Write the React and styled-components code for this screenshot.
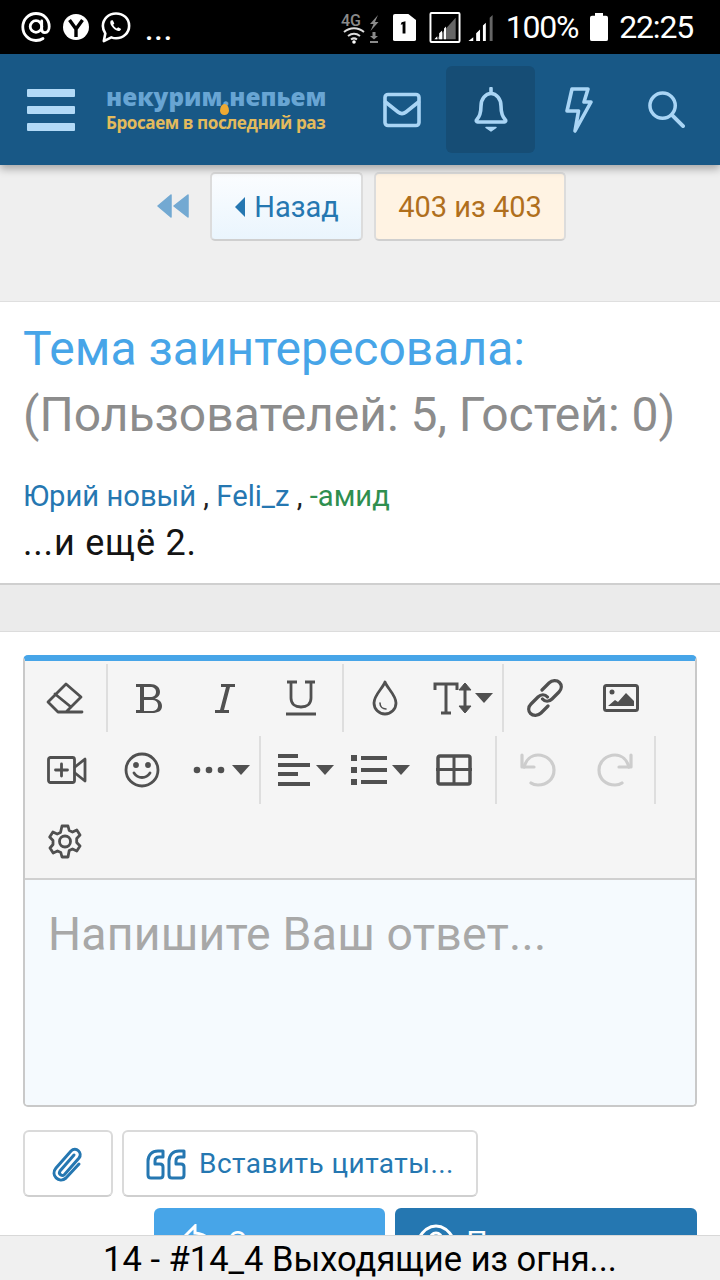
import React from "react";
import styled, { createGlobalStyle } from "styled-components";

const Global = createGlobalStyle`
  html, body { margin: 0; padding: 0; background: #fff; }
  * { box-sizing: border-box; }
  body { font-family: Roboto, "Liberation Sans", sans-serif; }
`;

const Page = styled.div`
  width: 720px; height: 1280px; overflow: hidden; position: relative; background: #efefef;
`;
const StatusBar = styled.div`
  height: 54px; background: #000; color: #fff; display: flex; align-items: center; padding: 0 27px 0 21px;
  font-family: Roboto, sans-serif; font-size: 32px;
`;
const StatusLeft = styled.div`display: flex; align-items: center; gap: 12px; flex: 1;`;
const Dots = styled.span`font-size: 30px; line-height: 1; margin: 6px 0 0 2px; letter-spacing: 1px; font-weight: 500;`;
const StatusRight = styled.div`display: flex; align-items: center;`;
const StatusText = styled.span`
  font-size: 32px; line-height: 1; letter-spacing: ${p => p.$ls}px;
  margin-left: ${p => p.$ml || 0}px;
`;
const Nav = styled.header`
  height: 111px; background: #185886; display: flex; align-items: center; padding-left: 27px;
  box-shadow: 0 4px 8px rgba(0,0,0,.3); position: relative; z-index: 1;
`;
const Burger = styled.div`
  width: 48px; height: 42px; display: flex; flex-direction: column; justify-content: space-between;
  span { height: 8px; background: #b2daf7; display: block; border-radius: 1px; }
`;
const Logo = styled.div`
  margin: 0 0 4px 31px; width: 222px; position: relative; height: 56px; font-family: "Open Sans", sans-serif; font-weight: 700;
`;
const LogoTop = styled.div`
  font-size: 24.3px; line-height: 33px; color: #68a5d3; white-space: nowrap; font-weight: 800;
`;
const LogoBottom = styled.div`
  font-size: 17.1px; line-height: 19px; color: #e3bb5c; letter-spacing: -0.45px; white-space: nowrap;
`;
const Flame = styled.span`
  position: absolute; left: 114px; top: 24px; width: 9px; height: 11px; background: #eeaa33; border-radius: 50% 50% 50% 50% / 65% 65% 40% 40%;
`;
const NavIcons = styled.div`display: flex; margin-left: 29px; align-items: center;`;
const NavIcon = styled.div`
  width: 89px; height: 87px; display: flex; align-items: center; justify-content: center; border-radius: 6px;
  background: ${p => (p.$active ? "#164d75" : "transparent")};
  padding-right: ${p => p.$pr || 0}px;
`;
const PagerRow = styled.div`
  height: 136px; padding: 7px 0 0 157px; display: flex; align-items: flex-start; background: #efefef;
`;
const BackArrows = styled.div`height: 68px; width: 53px; display: flex; align-items: center; flex: none;`;
const PagerButton = styled.div`
  height: 69px; display: flex; align-items: center; justify-content: center; border-radius: 5px; font-size: 29px;
  border: 2px solid #dcdcdc; border-bottom-color: #cfcfcf; margin-right: 11px; width: ${p => p.$w}px;
  color: ${p => p.$c}; background: ${p => p.$bg};
`;
const Block = styled.section`
  background: #fff; border-top: 1px solid #dfdfdf; border-bottom: 2px solid #cfcfcf; height: 284px; padding: 14px 23px 0;
`;
const Title = styled.div`font-size: 48px; line-height: 66px; color: #47a5e8; white-space: nowrap;`;
const Subtitle = styled(Title)`color: #8c8c8c;`;
const Users = styled.div`margin-top: 30px; font-size: 29.2px; line-height: 36px; color: #222; white-space: nowrap;`;
const UserLink = styled.span`color: ${p => p.$c || "#2577b1"};`;
const More = styled.div`font-size: 36px; line-height: 58px; color: #141414; white-space: nowrap; letter-spacing: .8px;`;
const Spacer = styled.div`height: 46px; background: #ebebeb;`;
const Reply = styled.section`
  background: #fff; border-top: 1px solid #dcdcdc; height: 700px; padding: 23px 23px 0;
`;
const Editor = styled.div`
  height: 452px; border-radius: 5px; overflow: hidden; border: 2px solid #c9c9c9; border-top: 6px solid #47a5e8; display: flex; flex-direction: column;
`;
const Toolbar = styled.div`
  background: #f5f5f5; height: 219px; border-bottom: 2px solid #d0d0d0; padding-top: 3px; padding-left: 2px;
`;
const ToolRow = styled.div`display: flex; height: 72px; align-items: flex-start; padding-left: ${p => p.$pl || 0}px;`;
const ToolButton = styled.div`
  width: 76px; height: 67px; display: flex; align-items: center; justify-content: center; flex: none;
  gap: ${p => p.$gap ?? 7}px; padding-left: ${p => p.$shift || 0}px;
`;
const ToolSep = styled.div`
  width: 2px; height: 68px; background: #dedede; flex: none;
  margin: 0 3px 0 ${p => p.$ml ?? 3}px;
`;
const Placeholder = styled.div`
  flex: 1; background: #f5fafe; padding: 28px 23px; font-size: 46.4px; line-height: 52px; color: #a8a8a8; white-space: nowrap; letter-spacing: .2px;
`;
const AttachRow = styled.div`display: flex; gap: 9px; margin-top: 23px;`;
const AttachButton = styled.div`
  height: 67px; border: 2px solid #dadada; border-bottom-color: #cfcfcf; border-radius: 6px; background: #fff; color: #2577b1;
  display: flex; align-items: center; justify-content: center; gap: 12px; font-size: 28px; width: ${p => p.$w}px; letter-spacing: .45px;
`;
const SubmitRow = styled.div`display: flex; justify-content: flex-end; gap: 10px; margin-top: 11px;`;
const SubmitButton = styled.div`
  height: 66px; border-radius: 6px; width: ${p => p.$w}px; background: ${p => p.$bg}; color: #fff; display: flex; align-items: flex-start; justify-content: center;
  gap: 10px; padding-top: 16px; font-size: 30px;
`;
const Footer = styled.div`
  position: fixed; left: 0; right: 0; top: 1235px; height: 45px; background: #f0f0f0; border-top: 1px solid #d8d8d8;
  color: #000; font-size: 34.5px; line-height: 47px; text-align: center; white-space: nowrap; z-index: 2;
`;
const StatusIcon = styled.svg`margin-left: ${p => p.$ml || 0}px; flex: none;`;

const navStroke = { fill: "none", stroke: "#a9d5f5", strokeWidth: 3.6, strokeLinecap: "round", strokeLinejoin: "round" };
const tool = { fill: "none", stroke: "#505050", strokeWidth: 2.8, strokeLinecap: "round", strokeLinejoin: "round" };
const dim = { ...tool, stroke: "#cdcdcd", strokeWidth: 3.2 };

const Caret = () => <svg width="18" height="10" viewBox="0 0 18 10"><path d="M0 0h18L9 10z" fill="#505050" /></svg>;

export default function App() {
  return (
    <Page>
      <Global />
      <StatusBar>
        <StatusLeft>
          <svg width="30" height="32" viewBox="0 0 30 32" fill="none" stroke="#fff" strokeWidth="2.8" strokeLinecap="round">
            <path d="M22 27.5c-2 1.4-4.5 2-7 2C7.5 29.5 1.8 23.5 1.8 16S7.5 2.5 15 2.5 28.2 8 28.2 15.5c0 3.6-1.7 6.2-4.3 6.2-2 0-3.2-1.5-3.2-3.6V10" />
            <circle cx="15" cy="15.5" r="5.8" />
          </svg>
          <svg width="26" height="28" viewBox="0 0 26 28">
            <circle cx="13" cy="14" r="13" fill="#fff" />
            <path d="M6.5 7l6.5 9 6.5-9M13 15.5V24" fill="none" stroke="#000" strokeWidth="3.4" />
          </svg>
          <svg width="30" height="33" viewBox="0 0 32 34" fill="none" stroke="#fff" strokeWidth="2.8">
            <path d="M16 2C8 2 2 8 2 15.5c0 3 1 5.6 2.6 7.8L3 31.5l8-4c1.500.6 3.200 1 5 1 8 0 14-6 14-13.500S24 2 16 2z" strokeLinejoin="round" />
            <path d="M10.500 9.500c-1 1.500-.8 3.500.8 6 1.800 2.700 4.200 4.700 7 5.200 1.500.2 2.700-.7 3.200-2.200l-3.200-1.800-1.500 1.300c-1.700-.8-3-2.200-3.800-4l1.200-1.300-1.600-3.400z" fill="#fff" stroke="none" />
          </svg>
          <Dots>...</Dots>
        </StatusLeft>
        <StatusRight>
          <StatusIcon width="40" height="44" viewBox="0 0 40 44">
            <text x="1" y="21" fontFamily="Roboto, sans-serif" fontSize="16" fontWeight="500" fill="#8a8a8a">4G</text>
            <path d="M4 27c6-5 14-5 20 0M8 31c4-3 8-3 12 0M11 34.500c2-1.500 4-1.500 6 0" fill="none" stroke="#dcdcdc" strokeWidth="2" />
            <circle cx="14" cy="37" r="1.800" fill="#fff" />
            <path d="M38 10l-8 9h3.500l-3 7 8-9H35z" fill="#8a8a8a" />
            <path d="M32.500 27h3v4h2.500l-4 3.500-4-3.500h2.500zM30 36h8v2h-8z" fill="#8a8a8a" />
          </StatusIcon>
          <StatusIcon $ml={13} width="23" height="27" viewBox="0 0 24 36" preserveAspectRatio="none">
            <path d="M2 0h14l8 8v26a2 2 0 0 1-2 2H2a2 2 0 0 1-2-2V2a2 2 0 0 1 2-2z" fill="#fff" />
            <path d="M9 11l4-1.500V26h-3V13.500l-2 .7z" fill="#000" />
          </StatusIcon>
          <StatusIcon $ml={13} width="32" height="31" viewBox="0 0 32 32">
            <rect x="1" y="1" width="30" height="30" rx="1" fill="#000" stroke="#fff" strokeWidth="2" />
            <path d="M27 6v22H7z" fill="#666" />
            <path d="M5 28l3-3v3zM10 28v-6l3-3v9zM15 28V17l2-2v13z" fill="#fff" />
          </StatusIcon>
          <StatusIcon $ml={6} width="28" height="29" viewBox="0 0 28 30">
            <path d="M1 29l5-4v4zM9 29V21l4-4v12zM16 29V13l3-3v19z" fill="#fff" />
            <path d="M23 29V5l3-3v27z" fill="#666" />
          </StatusIcon>
          <StatusText $ml={11} $ls={-1.2}>100%</StatusText>
          <StatusIcon $ml={12} width="18" height="28" viewBox="0 0 18 30" preserveAspectRatio="none">
            <path d="M5 0h8v3h3a2 2 0 0 1 2 2v23a2 2 0 0 1-2 2H2a2 2 0 0 1-2-2V5a2 2 0 0 1 2-2h3z" fill="#fff" />
          </StatusIcon>
          <StatusText $ml={11} $ls={-1.2}>22:25</StatusText>
        </StatusRight>
      </StatusBar>
      <Nav>
        <Burger><span /><span /><span /></Burger>
        <Logo>
          <LogoTop>некурим.непьем</LogoTop>
          <LogoBottom>Бросаем в последний раз</LogoBottom>
          <Flame />
        </Logo>
        <NavIcons>
          <NavIcon>
            <svg width="38" height="38" viewBox="0 0 38 38" style={navStroke}>
              <rect x="2" y="3.500" width="34" height="31" rx="3" />
              <path d="M2.500 11L15 21c2.500 2 5.500 2 8 0l12.500-10" />
            </svg>
          </NavIcon>
          <NavIcon $active>
            <svg width="34" height="46" viewBox="0 0 34 46" style={navStroke}>
              <path d="M17 1.500v4M2.500 33c3-3 4.500-6 4.500-14 0-7 4.500-12.500 10-12.500S27 12 27 19c0 8 1.500 11 4.500 14 .5.800 0 2-1 2H3.500c-1 0-1.500-1.200-1-2z" />
              <path d="M12 40.500h10L17 44z" fill="#a9d5f5" strokeWidth="1.500" />
            </svg>
          </NavIcon>
          <NavIcon $pr={2}>
            <svg width="28" height="46" viewBox="0 0 28 46" style={navStroke}>
              <path d="M7 2h16l-4 13h7L10 44l3.500-20H2z" />
            </svg>
          </NavIcon>
          <NavIcon $pr={4}>
            <svg width="37" height="37" viewBox="0 0 38 38" style={navStroke}>
              <circle cx="15" cy="15" r="13" />
              <path d="M25 25l11 11" strokeWidth="4" />
            </svg>
          </NavIcon>
        </NavIcons>
      </Nav>
      <PagerRow>
        <BackArrows>
          <svg width="32" height="24" viewBox="0 0 32 24"><path d="M14 1v22L1 12zM31 1v22L17 12z" fill="#73a9d2" stroke="#73a9d2" strokeWidth="1.500" strokeLinejoin="round" /></svg>
        </BackArrows>
        <PagerButton $w={153} $c="#2577b1" $bg="linear-gradient(#fbfdff, #eaf5fd)">
          <svg width="12" height="20" viewBox="0 0 12 20" style={{ marginRight: 8 }}><path d="M11 0v20L1 10z" fill="#2577b1" /></svg>
          Назад
        </PagerButton>
        <PagerButton $w={192} $c="#b06f1d" $bg="#fff3e3">403 из 403</PagerButton>
      </PagerRow>
      <Block>
        <Title>Тема заинтересовала:</Title>
        <Subtitle>(Пользователей: 5, Гостей: 0)</Subtitle>
        <Users>
          <UserLink>Юрий новый</UserLink> , <UserLink>Feli_z</UserLink> , <UserLink $c="#2f8f4f">-амид</UserLink>
        </Users>
        <More>...и ещё 2.</More>
      </Block>
      <Spacer />
      <Reply>
        <Editor>
          <Toolbar>
            <ToolRow>
              <ToolButton>
                <svg width="38" height="32" viewBox="0 0 38 32" style={tool}><path d="M12 30L2 20 20 2l15 13-15 15zM9 12l16 13M12 30h24" /></svg>
              </ToolButton>
              <ToolSep />
              <ToolButton>
                <svg width="28" height="32" viewBox="0 0 28 32" fill="#505050"><path fillRule="evenodd" d="M1 2h14c6 0 10 3 10 8 0 3-2 5.500-5 6.500 4 .8 7 3.500 7 7.500 0 5-4 7-10 7H1v-3h4V5H1zM9 5v10h6c4 0 6-2 6-5s-2-5-6-5zm0 13v11h7c5 0 7-2 7-5.500S21 18 16 18z" /></svg>
              </ToolButton>
              <ToolButton>
                <svg width="20" height="32" viewBox="0 0 20 32" fill="#505050"><path d="M6 2h14v3h-5l-6 23h5v3H0v-3h5l6-23H6z" /></svg>
              </ToolButton>
              <ToolButton>
                <svg width="32" height="36" viewBox="0 0 32 36" fill="none" stroke="#505050" strokeWidth="2.800"><path d="M2 2h10M20 2h10M6 2v16c0 6 4 9 10 9s10-3 10-9V2" /><path d="M1 34h30" strokeWidth="3.200" /></svg>
              </ToolButton>
              <ToolSep />
              <ToolButton>
                <svg width="26" height="36" viewBox="0 0 26 36" style={tool}><path d="M13 2c2 6 11 13 11 21a11 11 0 0 1-22 0C2 15 11 8 13 2z" /><path d="M8 23c0 4 3 6 6 6" strokeWidth="1.600" /></svg>
              </ToolButton>
              <ToolButton $gap={2} $shift={4}>
                <svg width="40" height="34" viewBox="0 0 40 34" fill="none" stroke="#505050" strokeWidth="3"><path d="M2 9V3h22v6M13 3v28M8 32h10" /><path d="M32 3v28" /><path d="M26 9l6-7 6 7zM26 25l6 7 6-7z" fill="#505050" strokeWidth="1" /></svg>
                <Caret />
              </ToolButton>
              <ToolSep />
              <ToolButton>
                <svg width="38" height="38" viewBox="0 0 38 38" fill="none" stroke="#505050" strokeWidth="3.200" strokeLinecap="round"><path d="M16 11l7-7c3-3 8-3 10.500-.5S36 10 33 13l-7 7c-3 3-7 3-9.500 0" /><path d="M22 27l-7 7c-3 3-8 3-10.500.5S2 28 5 25l7-7c3-3 7-3 9.500 0" /></svg>
              </ToolButton>
              <ToolButton>
                <svg width="36" height="28" viewBox="0 0 36 28"><rect x="1.500" y="1.500" width="33" height="25" rx="2" fill="none" stroke="#505050" strokeWidth="3" /><circle cx="9" cy="8" r="2.500" fill="#505050" /><path d="M5 22l7-6 3 2 8-9 8 8v5z" fill="#505050" /></svg>
              </ToolButton>
            </ToolRow>
            <ToolRow $pl={1}>
              <ToolButton $shift={2}>
                <svg width="40" height="28" viewBox="0 0 40 28" style={tool}><rect x="1.500" y="1.500" width="26" height="25" rx="2" /><path d="M14.500 8v12M8.500 14h12" /><path d="M28 11l10-8v22l-10-8" /></svg>
              </ToolButton>
              <ToolButton>
                <svg width="36" height="36" viewBox="0 0 36 36" style={tool}><circle cx="18" cy="18" r="16" /><path d="M10 21c4 6 12 6 16 0" /><circle cx="12" cy="13" r="1.500" fill="#505050" /><circle cx="24" cy="13" r="1.500" fill="#505050" /></svg>
              </ToolButton>
              <ToolButton $shift={6}>
                <svg width="32" height="8" viewBox="0 0 32 8" fill="#505050"><circle cx="4" cy="4" r="3.300" /><circle cx="16" cy="4" r="3.300" /><circle cx="28" cy="4" r="3.300" /></svg>
                <Caret />
              </ToolButton>
              <ToolSep />
              <ToolButton $shift={7} $gap={6}>
                <svg width="32" height="32" viewBox="0 0 32 32" fill="#505050"><path d="M0 0h20v4H0zM0 9h32v4H0zM0 18h20v4H0zM0 28h32v4H0z" /></svg>
                <Caret />
              </ToolButton>
              <ToolButton $shift={4} $gap={5}>
                <svg width="36" height="30" viewBox="0 0 36 30" fill="#505050"><path d="M0 0h6v6H0zM10 1h26v4H10zM0 12h6v6H0zM10 13h26v4H10zM0 24h6v6H0zM10 25h26v4H10z" /></svg>
                <Caret />
              </ToolButton>
              <ToolButton>
                <svg width="36" height="32" viewBox="0 0 36 32"><rect x="2" y="2" width="32" height="28" rx="2" fill="none" stroke="#505050" strokeWidth="3.500" /><path d="M0 14h36v3H0zM16.500 2h3v28h-3z" fill="#505050" /></svg>
              </ToolButton>
              <ToolSep />
              <ToolButton>
                <svg width="36" height="36" viewBox="0 0 36 36" style={dim}><path d="M2 3v12h12" /><path d="M4 15C6 8 11 3 18 3c8 0 16 6 16 15s-7 15-16 15c-3 0-5-.5-7-2" /></svg>
              </ToolButton>
              <ToolButton $shift={2}>
                <svg width="36" height="36" viewBox="0 0 36 36" style={dim}><path d="M34 3v12H22" /><path d="M32 15C30 8 25 3 18 3 10 3 2 9 2 18s7 15 16 15c3 0 5-.5 7-2" /></svg>
              </ToolButton>
              <ToolSep $ml={2} />
            </ToolRow>
            <ToolRow>
              <ToolButton>
                <svg width="34" height="35" viewBox="0 0 34 35" style={tool}><circle cx="17" cy="17.500" r="5.500" /><path d="M14 2h6l1.200 4.500 3.300 1.500 4.300-2 3.200 5-3.300 3.500v4l3.300 3.500-3.200 5-4.300-2-3.300 1.500L20 33h-6l-1.200-4.500-3.300-1.500-4.300 2-3.200-5L5 20.500v-4L1.700 13l3.200-5 4.300 2 3.300-1.500z" /></svg>
              </ToolButton>
            </ToolRow>
          </Toolbar>
          <Placeholder>Напишите Ваш ответ...</Placeholder>
        </Editor>
        <AttachRow>
          <AttachButton $w={90}>
            <svg width="36" height="38" viewBox="0 0 36 38" fill="none" stroke="#2577b1" strokeWidth="3" strokeLinecap="round"><path d="M24 10L10 26c-2 3 2 6 4.500 3.500L29 13c4-5-3-12-8-7L6 23c-6 7 3 16 10 10l13-14" /></svg>
          </AttachButton>
          <AttachButton $w={356}>
            <svg width="41" height="32" viewBox="0 0 41 32" fill="none" stroke="#2577b1" strokeWidth="3" strokeLinejoin="round"><path d="M17 3h-5C6 3 2 7 2 13v14c0 2 1 3 3 3h9c2 0 3-1 3-3v-8c0-2-1-3-3-3H9v-3c0-3 2-4 4-4h4zM38 3h-5c-6 0-10 4-10 10v14c0 2 1 3 3 3h9c2 0 3-1 3-3v-8c0-2-1-3-3-3h-5v-3c0-3 2-4 4-4h4z" /></svg>
            Вставить цитаты...
          </AttachButton>
        </AttachRow>
        <SubmitRow>
          <SubmitButton $w={231} $bg="#47a5e8">
            <svg width="36" height="30" viewBox="0 0 36 30" fill="none" stroke="#fff" strokeWidth="3"><path d="M14 2L2 14l12 12v-7c8 0 14 2 20 9-1-10-8-18-20-19z" /></svg>
            Ответить
          </SubmitButton>
          <SubmitButton $w={302} $bg="#2577b1">
            <svg width="40" height="30" viewBox="0 0 40 30" fill="none" stroke="#fff" strokeWidth="3"><path d="M2 15C8 5 14 2 20 2s12 3 18 13c-6 10-12 13-18 13S8 25 2 15z" /><circle cx="20" cy="15" r="6" /></svg>
            Предпросмотр
          </SubmitButton>
        </SubmitRow>
      </Reply>
      <Footer>14 - #14_4 Выходящие из огня...</Footer>
    </Page>
  );
}
